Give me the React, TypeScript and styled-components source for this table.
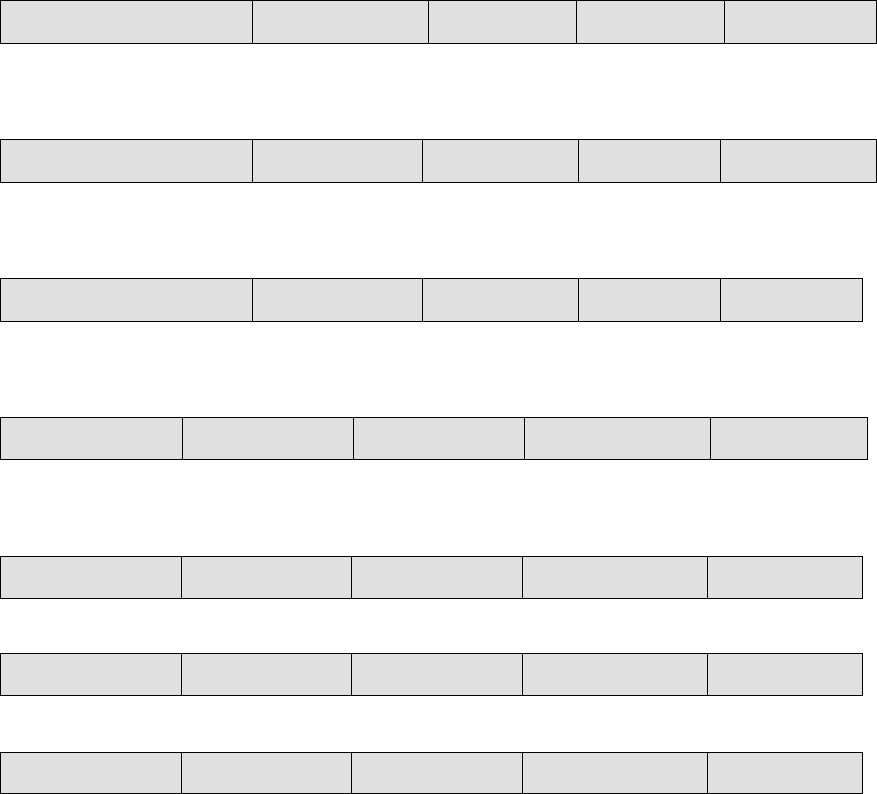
import styled, { createGlobalStyle } from "styled-components";

const GlobalStyle = createGlobalStyle`
  html, body {
    margin: 0;
    padding: 0;
    background: #ffffff;
    font-family: "Liberation Sans", Arial, sans-serif;
  }
`;

const Page = styled.div`
  display: flex;
  flex-direction: column;
  align-items: flex-start;
  width: 877px;
`;

const Bar = styled.div<{ $top: number; $height: number }>`
  display: flex;
  margin-top: ${(p) => p.$top}px;
  height: ${(p) => p.$height}px;
  box-sizing: border-box;
  border: 1px solid #000;
  border-right: none;
  background: #e0e0e0;
`;

const Cell = styled.div<{ $w: number }>`
  flex: 0 0 ${(p) => p.$w}px;
  box-sizing: border-box;
  border-right: 1px solid #000;
`;

interface RowSpec {
  top: number
  height: number
  cells: number[]
}

const rows: RowSpec[] = [
  { top: 0, height: 44, cells: [252, 176, 148, 148, 152] },
  { top: 95, height: 44, cells: [252, 170, 156, 142, 156] },
  { top: 95, height: 44, cells: [252, 170, 156, 142, 142] },
  { top: 95, height: 43, cells: [182, 171, 171, 186, 157] },
  { top: 96, height: 43, cells: [181, 170, 171, 185, 155] },
  { top: 54, height: 43, cells: [181, 170, 171, 185, 155] },
  { top: 56, height: 42, cells: [181, 170, 171, 185, 155] },
];

const App = () => {
  return (
    <>
      <GlobalStyle />
      <Page>
        {rows.map((row, i) => (
          <Bar key={i} $top={row.top} $height={row.height}>
            {row.cells.map((w, j) => (
              <Cell key={j} $w={w} />
            ))}
          </Bar>
        ))}
      </Page>
    </>
  );
};

export default App;
